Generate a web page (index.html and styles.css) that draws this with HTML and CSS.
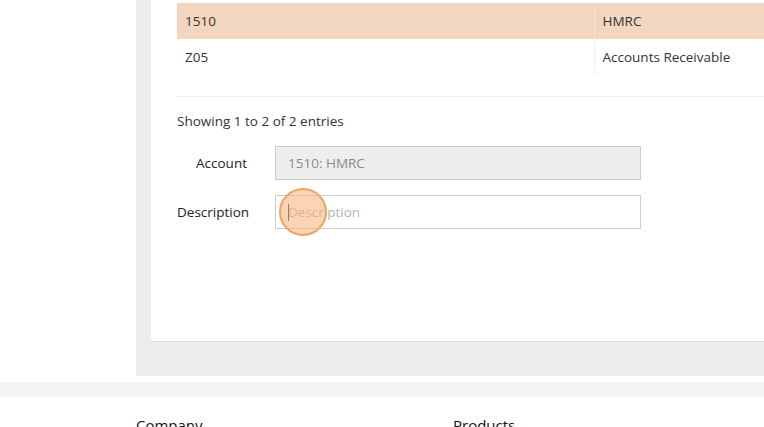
FILE: index.html
```html
<!DOCTYPE html>
<html lang="en">

<head>
  <meta charset="UTF-8">
  <meta name="viewport" content="width=device-width, initial-scale=1.0">
  <title>Journal line</title>
  <link rel="stylesheet" href="styles.css">
</head>

<body>
  <div class="layout">
    <aside class="sidebar"></aside>

    <main class="content">
      <div class="panel">
        <div class="table-scroll">
          <table class="accounts">
            <tbody>
              <tr class="selected">
                <td>1510</td>
                <td>HMRC</td>
              </tr>
              <tr>
                <td>Z05</td>
                <td>Accounts Receivable</td>
              </tr>
            </tbody>
          </table>
        </div>

        <div class="table-info">Showing 1 to 2 of 2 entries</div>

        <form class="form">
          <div class="form-row">
            <label class="form-label">Account</label>
            <div class="form-field">
              <input class="form-input" type="text" value="1510: HMRC" disabled>
            </div>
          </div>
          <div class="form-row">
            <label class="form-label">Description</label>
            <div class="form-field">
              <input class="form-input" type="text" placeholder="Description">
              <span class="caret"></span>
              <span class="click-mark"></span>
            </div>
          </div>
        </form>
      </div>
    </main>
  </div>

  <div class="footer-strip"></div>

  <footer class="footer">
    <div class="footer-col">Company</div>
    <div class="footer-col">Products</div>
  </footer>
</body>

</html>
```

FILE: styles.css
```css
html,
body {
  margin: 0;
  padding: 0;
  overflow: hidden;
}

body {
  font-family: "Open Sans", "Liberation Sans", sans-serif;
  font-size: 13.5px;
  color: #333;
  background: #fff;
}

.layout {
  display: flex;
}

.sidebar {
  width: 136px;
  flex-shrink: 0;
  background: #fff;
}

.content {
  flex: 1;
  background: #eeeded;
  padding: 0 0 34px 15px;
}

.panel {
  background: #fff;
  border-bottom: 1px solid #d9d9d9;
  padding: 0 0 112px 26px;
}

.table-scroll {
  padding-top: 3px;
  height: 93px;
  border-bottom: 1px solid #efefef;
}

.accounts {
  width: 100%;
  border-collapse: collapse;
}

.accounts td {
  height: 36px;
  padding: 0 8px;
  box-sizing: border-box;
  vertical-align: middle;
}

.accounts td:first-child {
  width: 417px;
}

.accounts td + td {
  border-left: 1px solid #f1f1f1;
}

.accounts tr.selected td {
  background: #f2d6c0;
}

.accounts tr.selected td + td {
  border-left-color: #f6e3d4;
}

.table-info {
  margin-top: 14px;
  line-height: 20px;
}

.form {
  margin-top: 15px;
  display: flex;
  flex-direction: column;
  gap: 15px;
}

.form-row {
  display: flex;
  align-items: center;
}

.form-label {
  width: 70px;
  text-align: right;
  color: #222;
  margin-right: 28px;
}

.form-field {
  position: relative;
}

.form-input {
  width: 366px;
  height: 34px;
  box-sizing: border-box;
  border: 1px solid #ccc;
  padding: 0 12px;
  font-family: inherit;
  font-size: 13.5px;
  color: #333;
  background: #fff;
  outline: none;
}

.form-input:disabled {
  background: #eee;
  color: #8a8a8a;
}

.form-input::placeholder {
  color: #b5b5b5;
}

.caret {
  position: absolute;
  left: 13px;
  top: 9px;
  width: 1px;
  height: 17px;
  background: #333;
}

.click-mark {
  position: absolute;
  left: 4px;
  top: -7px;
  width: 48px;
  height: 48px;
  box-sizing: border-box;
  border-radius: 50%;
  border: 2px solid #f2a35e;
  background: rgba(246, 176, 116, 0.55);
}

.footer-strip {
  margin-top: 6px;
  height: 15px;
  background: #f3f4f5;
}

.footer {
  display: flex;
  padding: 18px 0 0 136px;
}

.footer-col {
  width: 317px;
  flex-shrink: 0;
  font-size: 15px;
  color: #111;
}
```
